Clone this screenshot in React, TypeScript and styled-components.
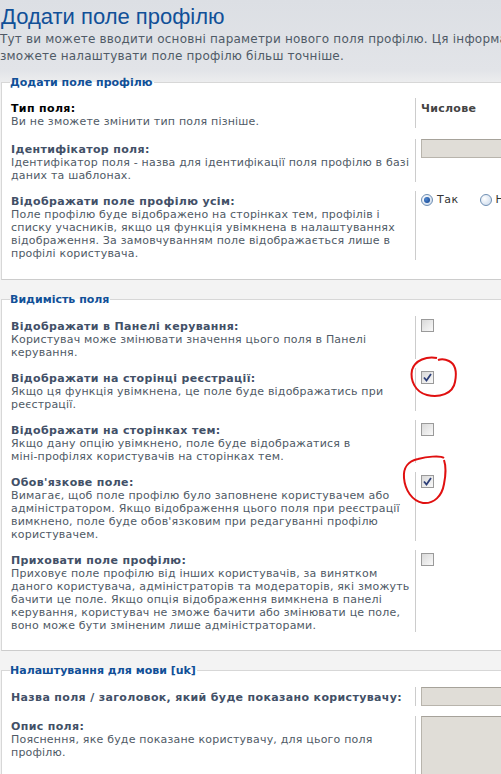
import React from "react";
import styled, { createGlobalStyle } from "styled-components";

const GlobalStyle = createGlobalStyle`
  html, body {
    margin: 0;
    padding: 0;
    background: #f3f3f3;
    overflow: hidden;
  }
`;

const Page = styled.div`
  position: relative;
  width: 501px;
  height: 774px;
  overflow: hidden;
  background: linear-gradient(#dcdfe4 0, #e2e4e8 70px, #f3f3f3 90px);
  font-family: "DejaVu Sans", Verdana, sans-serif;
`;

const Title = styled.h1`
  margin: 0;
  padding: 5px 0 0 1px;
  font-family: "Liberation Sans", "Trebuchet MS", sans-serif;
  font-weight: normal;
  font-size: 22px;
  line-height: 24px;
  color: #115098;
  white-space: nowrap;
`;

const Intro = styled.p`
  margin: 2px 0 0;
  font-size: 12px;
  line-height: 17px;
  letter-spacing: 0.2px;
  color: #4f5a66;
  white-space: nowrap;
`;

const Fieldset = styled.fieldset<{ $first?: boolean }>`
  width: 560px;
  margin: ${p => (p.$first ? "10px" : "12px")} 0 0 1px;
  padding: ${p => (p.$first ? "8px" : "9px")} 10px 9.5px 9px;
  border-top: 1px solid #d7d7d7;
  border-left: 1px solid #d7d7d7;
  border-right: 1px solid #cccccc;
  border-bottom: 1px solid #cccccc;
  background: #ffffff;
  box-sizing: content-box;
`;

const Legend = styled.legend`
  padding: 0 1px 0 0;
  margin-left: -1px;
  font-family: "DejaVu Sans", Tahoma, sans-serif;
  font-weight: bold;
  font-size: 11px;
  line-height: 15px;
  color: #115098;
`;

const Row = styled.dl<{ $space: number }>`
  display: flex;
  align-items: stretch;
  margin: 0 0 ${p => p.$space}px;
`;

const Term = styled.dt`
  width: 404px;
  flex: none;
  padding-top: 4px;
`;

const Label = styled.div<{ $plain?: boolean }>`
  font-weight: bold;
  font-size: 11px;
  line-height: 13px;
  letter-spacing: 0.35px;
  color: ${p => (p.$plain ? "#000000" : "#425067")};
  white-space: nowrap;
`;

const Explain = styled.span`
  display: block;
  font-size: 11px;
  line-height: 13px;
  letter-spacing: 0.2px;
  color: #4f5a66;
  white-space: nowrap;
`;

const Value = styled.dd<{ $top: number }>`
  flex: 1;
  margin: 0;
  padding: ${p => p.$top}px 0 0 5px;
  border-left: 1px solid #cccccc;
  display: flex;
  align-items: flex-start;
  gap: 4px;
`;

const Strong = styled.strong`
  font-size: 11px;
  line-height: 13px;
  letter-spacing: 0.3px;
  color: #444444;
`;

const TextBox = styled.div<{ $tall?: boolean }>`
  width: 200px;
  height: ${p => (p.$tall ? "80px" : "17px")};
  border: 1px solid #b8b4ac;
  border-top-color: #a6a29a;
  background: #e0ddd7;
`;

const RadioGroup = styled.label`
  display: flex;
  align-items: center;
  gap: 4px;
  margin-right: 17px;
  font-size: 11px;
  line-height: 13px;
  letter-spacing: 0.5px;
  color: #333333;
`;

const Radio = styled.span<{ $on?: boolean }>`
  position: relative;
  width: 12px;
  height: 12px;
  box-sizing: border-box;
  border-radius: 50%;
  border: 1px solid #6f8fb3;
  background: radial-gradient(circle at 35% 35%, #ffffff, #c6d6ea);
  &::after {
    content: "";
    display: ${p => (p.$on ? "block" : "none")};
    position: absolute;
    left: 2px;
    top: 2px;
    width: 6px;
    height: 6px;
    border-radius: 50%;
    background: radial-gradient(circle at 35% 35%, #4f86d0, #0d3f8a);
  }
`;

const Check = styled.span`
  display: flex;
  align-items: center;
  justify-content: center;
  width: 13px;
  height: 13px;
  box-sizing: border-box;
  border: 1px solid #9a9a9a;
  background: linear-gradient(135deg, #d9d9d9, #f9f9f9);
`;

const Mark = styled.svg`
  width: 9px;
  height: 9px;
`;

const Circle = styled.svg`
  position: absolute;
  pointer-events: none;
`;

type Field = {
  label: string;
  lines?: string[];
  plain?: boolean;
  control: React.ReactNode;
  top: number;
  space?: number;
};

const CheckBox = ({ checked }: { checked?: boolean }) => (
  <Check>
    {checked && (
      <Mark viewBox="0 0 9 9">
        <path d="M1 4.5 L3.5 7.5 L8 1" fill="none" stroke="#2d3f78" strokeWidth="1.8" />
      </Mark>
    )}
  </Check>
);

const general: Field[] = [
  {
    label: "Тип поля:",
    plain: true,
    lines: ["Ви не зможете змінити тип поля пізніше."],
    control: <Strong>Числове</Strong>,
    top: 4,
    space: 11,
  },
  {
    label: "Ідентифікатор поля:",
    lines: [
      "Ідентифікатор поля - назва для ідентифікації поля профілю в базі",
      "даних та шаблонах.",
    ],
    control: <TextBox />,
    top: 0,
  },
  {
    label: "Відображати поле профілю усім:",
    lines: [
      "Поле профілю буде відображено на сторінках тем, профілів і",
      "списку учасників, якщо ця функція увімкнена в налаштуваннях",
      "відображення. За замовчуванням поле відображається лише в",
      "профілі користувача.",
    ],
    control: (
      <>
        <RadioGroup>
          <Radio $on />
          Так
        </RadioGroup>
        <RadioGroup>
          <Radio />
          Ні
        </RadioGroup>
      </>
    ),
    top: 2,
  },
];

const visibility: Field[] = [
  {
    label: "Відображати в Панелі керування:",
    lines: ["Користувач може змінювати значення цього поля в Панелі", "керування."],
    control: <CheckBox />,
    top: 3,
  },
  {
    label: "Відображати на сторінці реєстрації:",
    lines: ["Якщо ця функція увімкнена, це поле буде відображатись при", "реєстрації."],
    control: <CheckBox checked />,
    top: 3,
  },
  {
    label: "Відображати на сторінках тем:",
    lines: ["Якщо дану опцію увімкнено, поле буде відображатися в", "міні-профілях користувачів на сторінках тем."],
    control: <CheckBox />,
    top: 3,
  },
  {
    label: "Обов'язкове поле:",
    lines: [
      "Вимагає, щоб поле профілю було заповнене користувачем або",
      "адміністратором. Якщо відображення цього поля при реєстрації",
      "вимкнено, поле буде обов'язковим при редагуванні профілю",
      "користувачем.",
    ],
    control: <CheckBox checked />,
    top: 3,
  },
  {
    label: "Приховати поле профілю:",
    lines: [
      "Приховує поле профілю від інших користувачів, за винятком",
      "даного користувача, адміністраторів та модераторів, які зможуть",
      "бачити це поле. Якщо опція відображення вимкнена в панелі",
      "керування, користувач не зможе бачити або змінювати це поле,",
      "воно може бути зміненим лише адміністраторами.",
    ],
    control: <CheckBox />,
    top: 3,
  },
];

const language: Field[] = [
  {
    label: "Назва поля / заголовок, який буде показано користувачу:",
    control: <TextBox />,
    top: 0,
    space: 9.5,
  },
  {
    label: "Опис поля:",
    lines: ["Пояснення, яке буде показане користувачу, для цього поля", "профілю."],
    control: <TextBox $tall />,
    top: 0,
  },
];

const Rows = ({ items }: { items: Field[] }) => (
  <>
    {items.map(f => (
      <Row key={f.label} $space={f.space ?? 9}>
        <Term>
          <Label $plain={f.plain}>{f.label}</Label>
          {f.lines &&
            f.lines.map(l => <Explain key={l}>{l}</Explain>)}
        </Term>
        <Value $top={f.top}>{f.control}</Value>
      </Row>
    ))}
  </>
);

export default function App() {
  return (
    <Page>
      <GlobalStyle />
      <Title>Додати поле профілю</Title>
      <Intro>
        Тут ви можете вводити основні параметри нового поля профілю. Ця інформація потрібна для першого кроку, пізніше ви
        <br />
        зможете налаштувати поле профілю більш точніше.
      </Intro>

      <Fieldset $first>
        <Legend>Додати поле профілю</Legend>
        <Rows items={general} />
      </Fieldset>

      <Fieldset>
        <Legend>Видимість поля</Legend>
        <Rows items={visibility} />
      </Fieldset>

      <Fieldset>
        <Legend>Налаштування для мови [uk]</Legend>
        <Rows items={language} />
      </Fieldset>

      <Circle style={{ left: 407, top: 354 }} width="54" height="46" viewBox="0 0 54 46">
        <path
          d="M30 4 C20 2 8 6 5 16 C3 26 8 38 20 41 C32 44 46 40 48 28 C50 18 48 10 42 7 C38 5 34 5 31 6"
          fill="none"
          stroke="#e01010"
          strokeWidth="2"
        />
      </Circle>
      <Circle style={{ left: 396, top: 454 }} width="56" height="54" viewBox="0 0 56 54">
        <path
          d="M48 4 C44 1 30 3 22 5 C12 7 7 14 8 24 C9 36 16 47 27 49 C38 50 46 42 48 30 C50 20 50 12 48 6"
          fill="none"
          stroke="#e01010"
          strokeWidth="2"
        />
      </Circle>
    </Page>
  );
}
